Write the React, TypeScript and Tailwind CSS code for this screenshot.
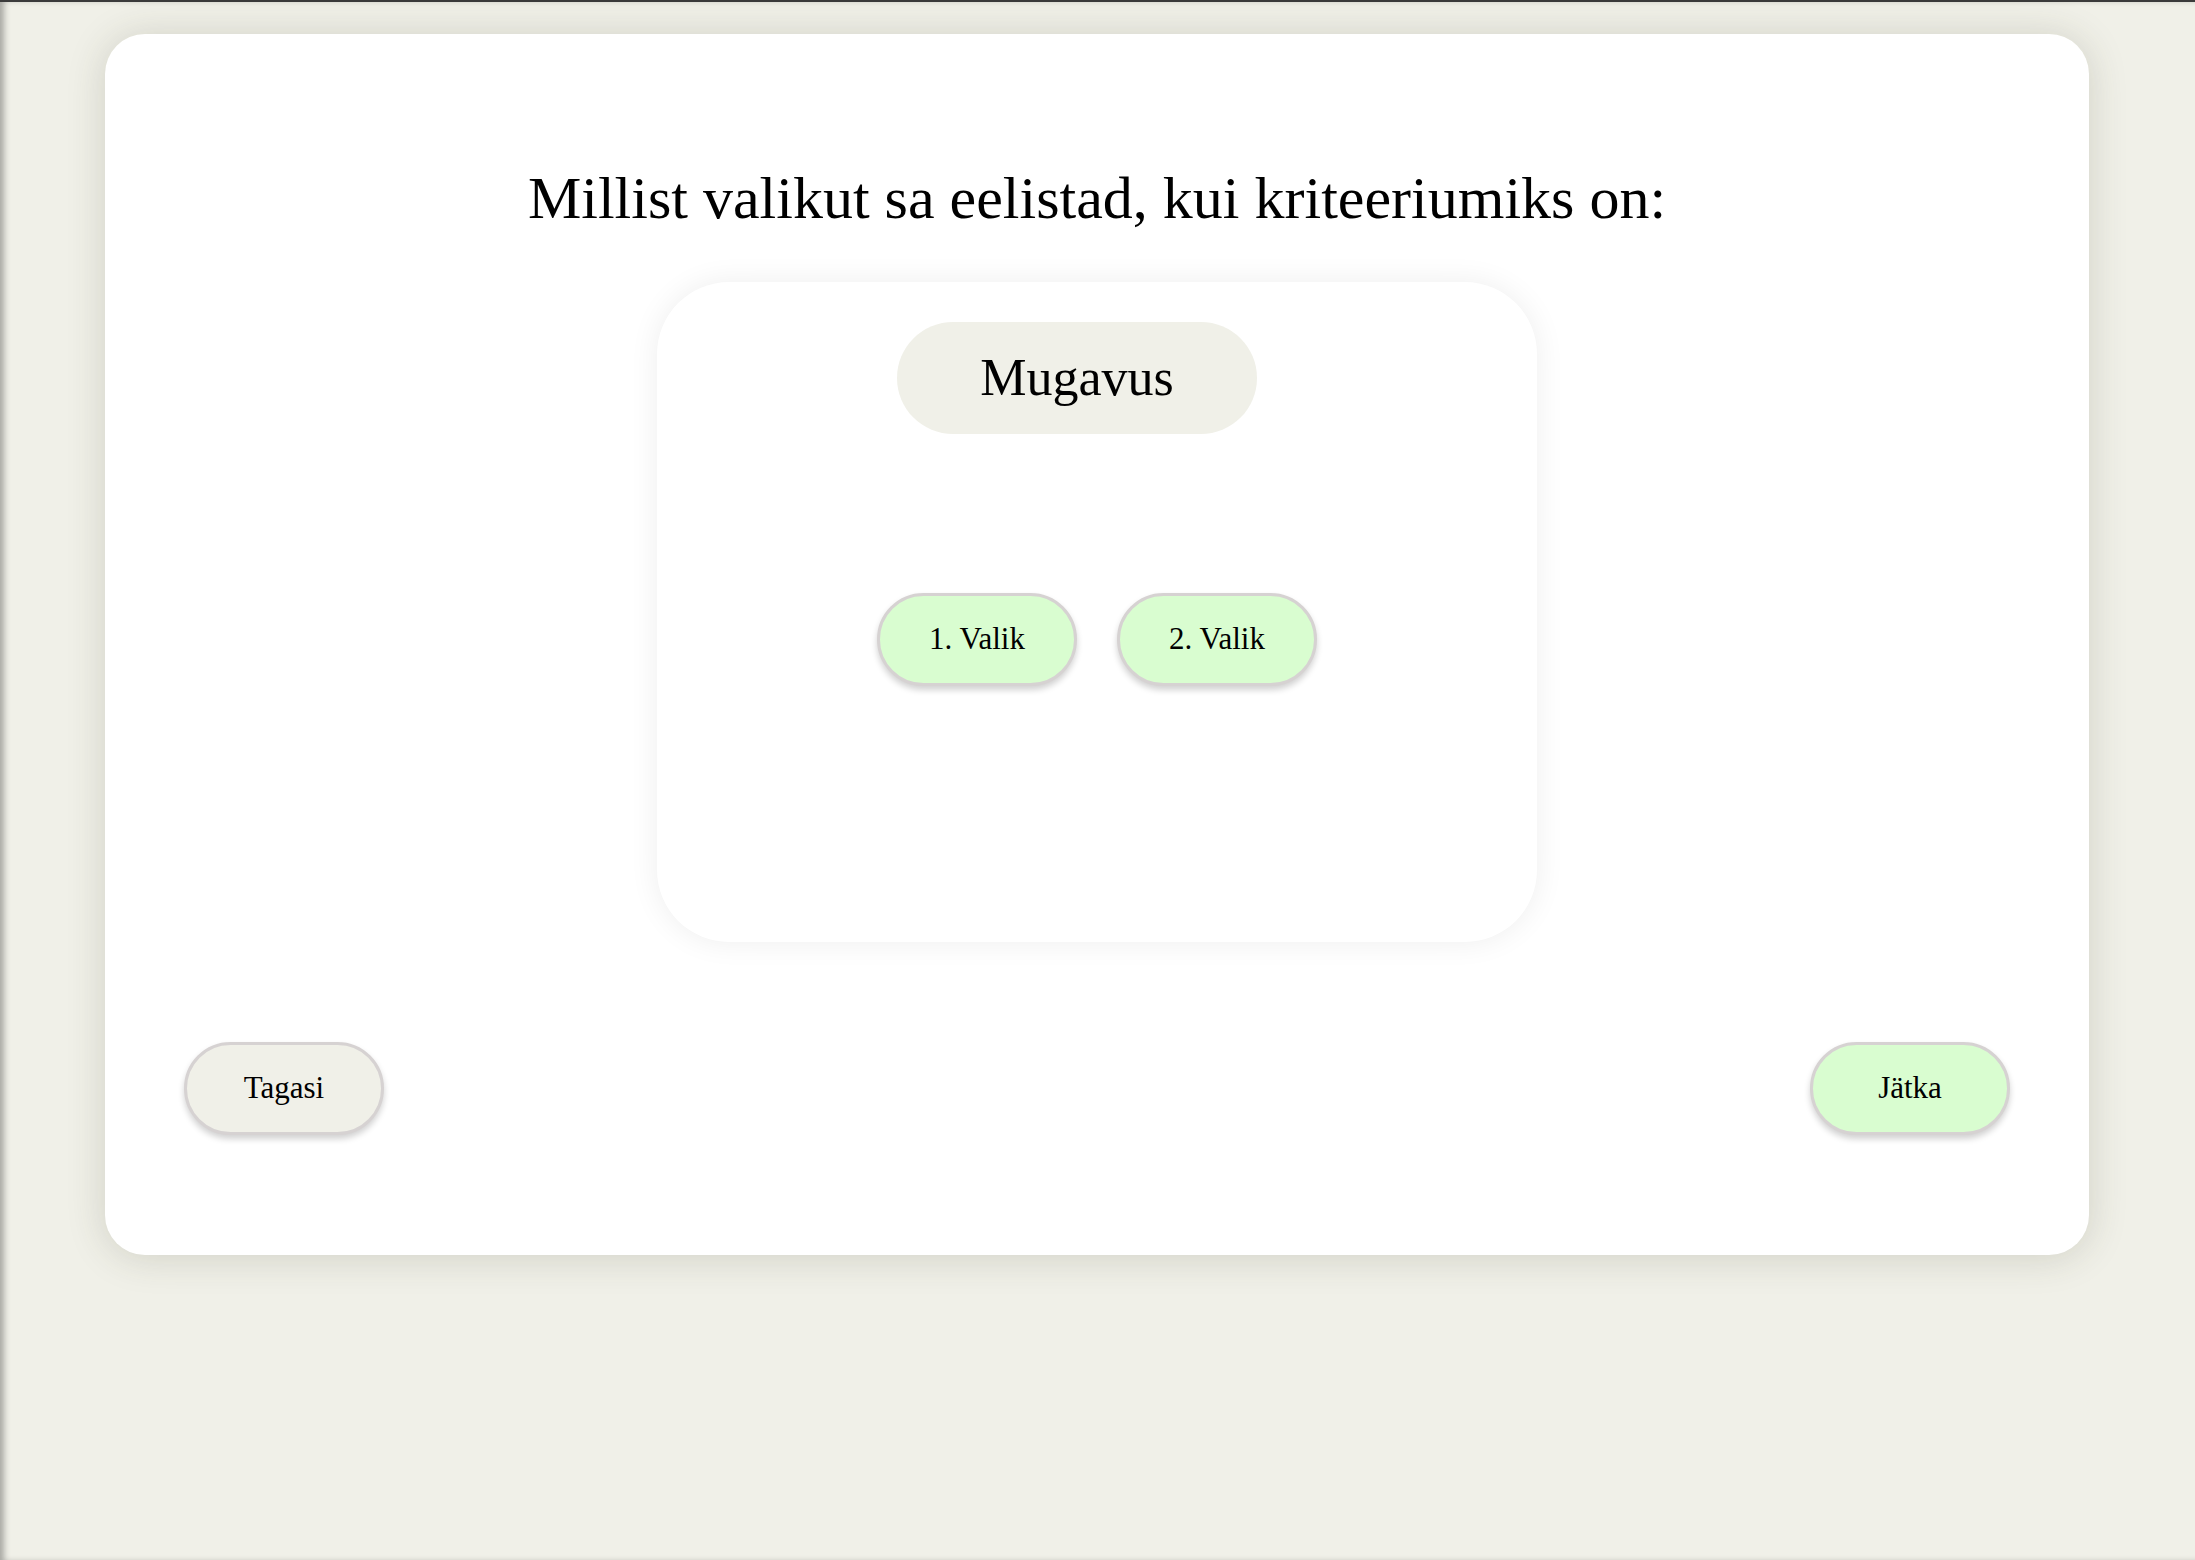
import React from 'react';

const pillBtn =
  "flex items-center justify-center w-[200px] h-[93px] rounded-full border-[3px] border-[#d6d2d2] shadow-[0_4px_6px_rgba(0,0,0,0.18)] text-[31px] text-black";

const App: React.FC = () => {
  const options = ["1. Valik", "2. Valik"];

  return (
    <div
      className="min-h-screen bg-[#f0f0e8] border-t-2 border-[#3b3b3b] pt-[32px] shadow-[inset_6px_0_6px_-2px_rgba(0,0,0,0.3)]"
      style={{ fontFamily: '"Liberation Serif", "Times New Roman", serif' }}
    >
      {/* Main card */}
      <div className="ml-[105px] mr-[106px] bg-white rounded-[40px] shadow-[0_2px_38px_rgba(60,60,40,0.18)] pt-[130px] pb-[120px]">
        <h1 className="text-center text-[60px] leading-[69px] text-black">
          Millist valikut sa eelistad, kui kriteeriumiks on:
        </h1>

        {/* Criterion panel */}
        <div className="mt-[49px] mx-auto w-[880px] h-[660px] bg-white rounded-[72px] shadow-[0_0_30px_rgba(0,0,0,0.07)] flex flex-col items-center pt-[40px]">
          <div className="w-[360px] h-[112px] mr-[40px] rounded-full bg-[#f0f0e8] flex items-center justify-center text-[52px] text-black">
            Mugavus
          </div>

          <div className="mt-[159px] flex gap-[40px]">
            {options.map((opt) => (
              <button key={opt} className={`${pillBtn} bg-[#d9fdd0]`}>
                {opt}
              </button>
            ))}
          </div>
        </div>

        {/* Navigation */}
        <div className="mt-[100px] px-[79px] flex justify-between">
          <button className={`${pillBtn} bg-[#f0f0e8]`}>Tagasi</button>
          <button className={`${pillBtn} bg-[#d9fdd0]`}>Jätka</button>
        </div>
      </div>
    </div>
  );
};

export default App;
